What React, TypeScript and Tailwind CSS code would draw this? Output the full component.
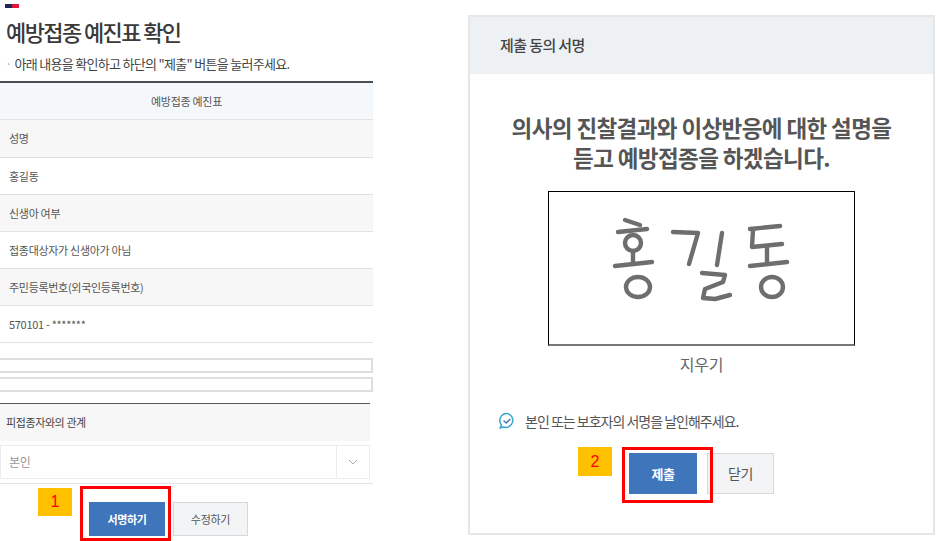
const font = { fontFamily: '"Noto Sans CJK KR", "Noto Sans", sans-serif' };

function Row({ children, shade, h }: { children: React.ReactNode; shade?: boolean; h: string }) {
  return (
    <div className={`${h} flex items-center pl-[9px] border-b border-[#e2e2e2] text-[11px] tracking-[-0.3px] text-[#555] ${shade ? "bg-[#f7f7f7]" : "bg-white"}`}>
      {children}
    </div>
  );
}

function Signature() {
  return (
    <svg viewBox="0 0 220 105" className="w-[220px] h-[105px]" fill="none" stroke="#6e6e6e" strokeWidth="4.4" strokeLinecap="round" strokeLinejoin="round">
      <path d="M35 15 L50 20" />
      <path d="M28 27 L57 24" />
      <ellipse cx="43" cy="38" rx="8" ry="8" />
      <path d="M43 46 L43 57" />
      <path d="M25 61 L62 57" />
      <ellipse cx="48" cy="82" rx="12" ry="10" />
      <path d="M83 27 L108 28 L99 59" />
      <path d="M132 28 L127 60" />
      <path d="M112 68 L135 70 L133 77 L115 84 L113 93 L125 94 L140 90" />
      <path d="M160 24 L190 21" />
      <path d="M163 25 L162 42 L192 39" />
      <path d="M177 42 L177 57" />
      <path d="M160 61 L197 57" />
      <ellipse cx="182" cy="82" rx="11" ry="10" />
    </svg>
  );
}

export default function App() {
  return (
    <div className="w-[937px] h-[541px] bg-white flex overflow-hidden text-[#444]" style={font}>
      <div className="w-[373px] shrink-0 flex flex-col">
        <div className="ml-[5px] mt-[4px] flex h-[4px] w-[14px]">
          <span className="w-[7px] bg-[#1b2a5c]" />
          <span className="w-[7px] bg-[#e0173d]" />
        </div>
        <h1 className="ml-[6px] mt-[8px] text-[22px] leading-[30px] font-medium tracking-[-1.6px] text-[#3a3a3a]">예방접종 예진표 확인</h1>
        <p className="ml-[5px] mt-[9px] text-[13px] leading-[18px] tracking-[-0.7px] text-[#444]">
          <span className="text-[#aaa] mr-[3px]">·</span>아래 내용을 확인하고 하단의 "제출" 버튼을 눌러주세요.
        </p>
        <div className="mt-[8px] border-t-2 border-[#4a4f55]">
          <div className="h-[37px] flex items-center justify-center bg-[#f5f8fb] border-b border-[#e2e2e2] text-[11px] tracking-[-0.3px] text-[#555]">예방접종 예진표</div>
          <Row shade h="h-[38px]">성명</Row>
          <Row h="h-[37px]">홍길동</Row>
          <Row shade h="h-[37px]">신생아 여부</Row>
          <Row h="h-[37px]">접종대상자가 신생아가 아님</Row>
          <Row shade h="h-[37px]">주민등록번호(외국인등록번호)</Row>
          <Row h="h-[37px]">570101 - *******</Row>
        </div>
        <div className="mt-[15px] h-[15px] border-2 border-[#dedede] border-l-0 bg-white" />
        <div className="mt-[4px] h-[15px] border-2 border-[#dedede] border-l-0 bg-white" />
        <div className="mt-[11px] h-[38px] border-t border-[#555] bg-[#f7f7f7] flex items-center pl-[6px] mr-[3px] text-[11px] tracking-[-0.4px] text-[#444]">피접종자와의 관계</div>
        <div className="mt-[4px] h-[34px] flex items-center justify-between border border-[#ececec] mr-[3px] pl-[8px] text-[12px] tracking-[-0.4px] text-[#999]">
          <span>본인</span>
          <span className="w-[33px] h-full border-l border-[#ececec] flex items-center justify-center">
            <svg width="10" height="6" viewBox="0 0 10 6" fill="none" stroke="#aaa" strokeWidth="1"><path d="M1 1 L5 5 L9 1" /></svg>
          </span>
        </div>
        <div className="mt-[4px] border-t border-[#e2e2e2] flex items-start">
          <span className="ml-[38px] mt-[4px] w-[34px] h-[28px] bg-[#ffc000] flex items-center justify-center text-[16px] text-[#ff0000]" style={{ fontFamily: '"Liberation Sans", sans-serif' }}>1</span>
          <div className="ml-[8px] mt-[2px] w-[91px] h-[55px] border-[3px] border-[#ff0000] flex items-start pt-[13px] pl-[6px]">
            <button className="w-[76px] h-[34px] bg-[#3f75ba] text-white text-[11px] font-bold tracking-[-0.4px]">서명하기</button>
          </div>
          <button className="ml-[2px] mt-[18px] w-[75px] h-[34px] bg-[#f3f4f6] border border-[#d8d8d8] text-[11px] tracking-[-0.3px] text-[#555]">수정하기</button>
        </div>
      </div>
      <div className="ml-[95px] mt-[15px] w-[467px] h-[520px] border-2 border-[#e6e6e6] flex flex-col items-center">
        <div className="self-stretch h-[57px] bg-[#eef1f4] flex items-center pl-[30px] text-[15px] font-medium tracking-[-0.6px] text-[#444]">제출 동의 서명</div>
        <div className="mt-[38px] text-center text-[22.5px] leading-[30px] font-bold tracking-[-0.6px] text-[#555]">
          <p>의사의 진찰결과와 이상반응에 대한 설명을</p>
          <p>듣고 예방접종을 하겠습니다.</p>
        </div>
        <div className="mt-[19px] w-[307px] h-[155px] border border-black border-b-2 border-b-[#777] flex items-start pt-[13px] pl-[41px] bg-white">
          <Signature />
        </div>
        <div className="mt-[8px] text-[16px] leading-[20px] tracking-[-0.3px] text-[#666]">지우기</div>
        <div className="self-start ml-[28px] mt-[37px] flex items-center gap-[9px] text-[14px] leading-[20px] tracking-[-1px] text-[#555]">
          <svg width="18" height="18" viewBox="0 0 18 18" fill="none" strokeLinecap="round" strokeLinejoin="round">
            <path d="M9 1.5 A7 7 0 1 1 5.5 15 L2 16 L3.5 13 A7 7 0 0 1 9 1.5 Z" stroke="#37a8c9" strokeWidth="1.5" />
            <path d="M6 9 L8.2 11 L12 7.2" stroke="#3f75ba" strokeWidth="1.4" />
          </svg>
          본인 또는 보호자의 서명을 날인해주세요.
        </div>
        <div className="self-start ml-[108px] mt-[16px] flex items-start">
          <span className="w-[34px] h-[29px] bg-[#ffc000] flex items-center justify-center text-[16px] text-[#ff0000]" style={{ fontFamily: '"Liberation Sans", sans-serif' }}>2</span>
          <div className="relative z-10 ml-[10px] w-[91px] h-[56px] border-[3px] border-[#ff0000] pl-[4px] pt-[3px] flex items-start">
            <button className="w-[68px] h-[41px] bg-[#3f75ba] text-white text-[13px] font-bold tracking-[-0.4px]">제출</button>
          </div>
          <button className="ml-[-6px] mt-[6px] w-[67px] h-[41px] bg-[#f2f4f6] border border-[#d8d8d8] text-[14px] tracking-[-0.4px] text-[#555]">닫기</button>
        </div>
      </div>
    </div>
  );
}
